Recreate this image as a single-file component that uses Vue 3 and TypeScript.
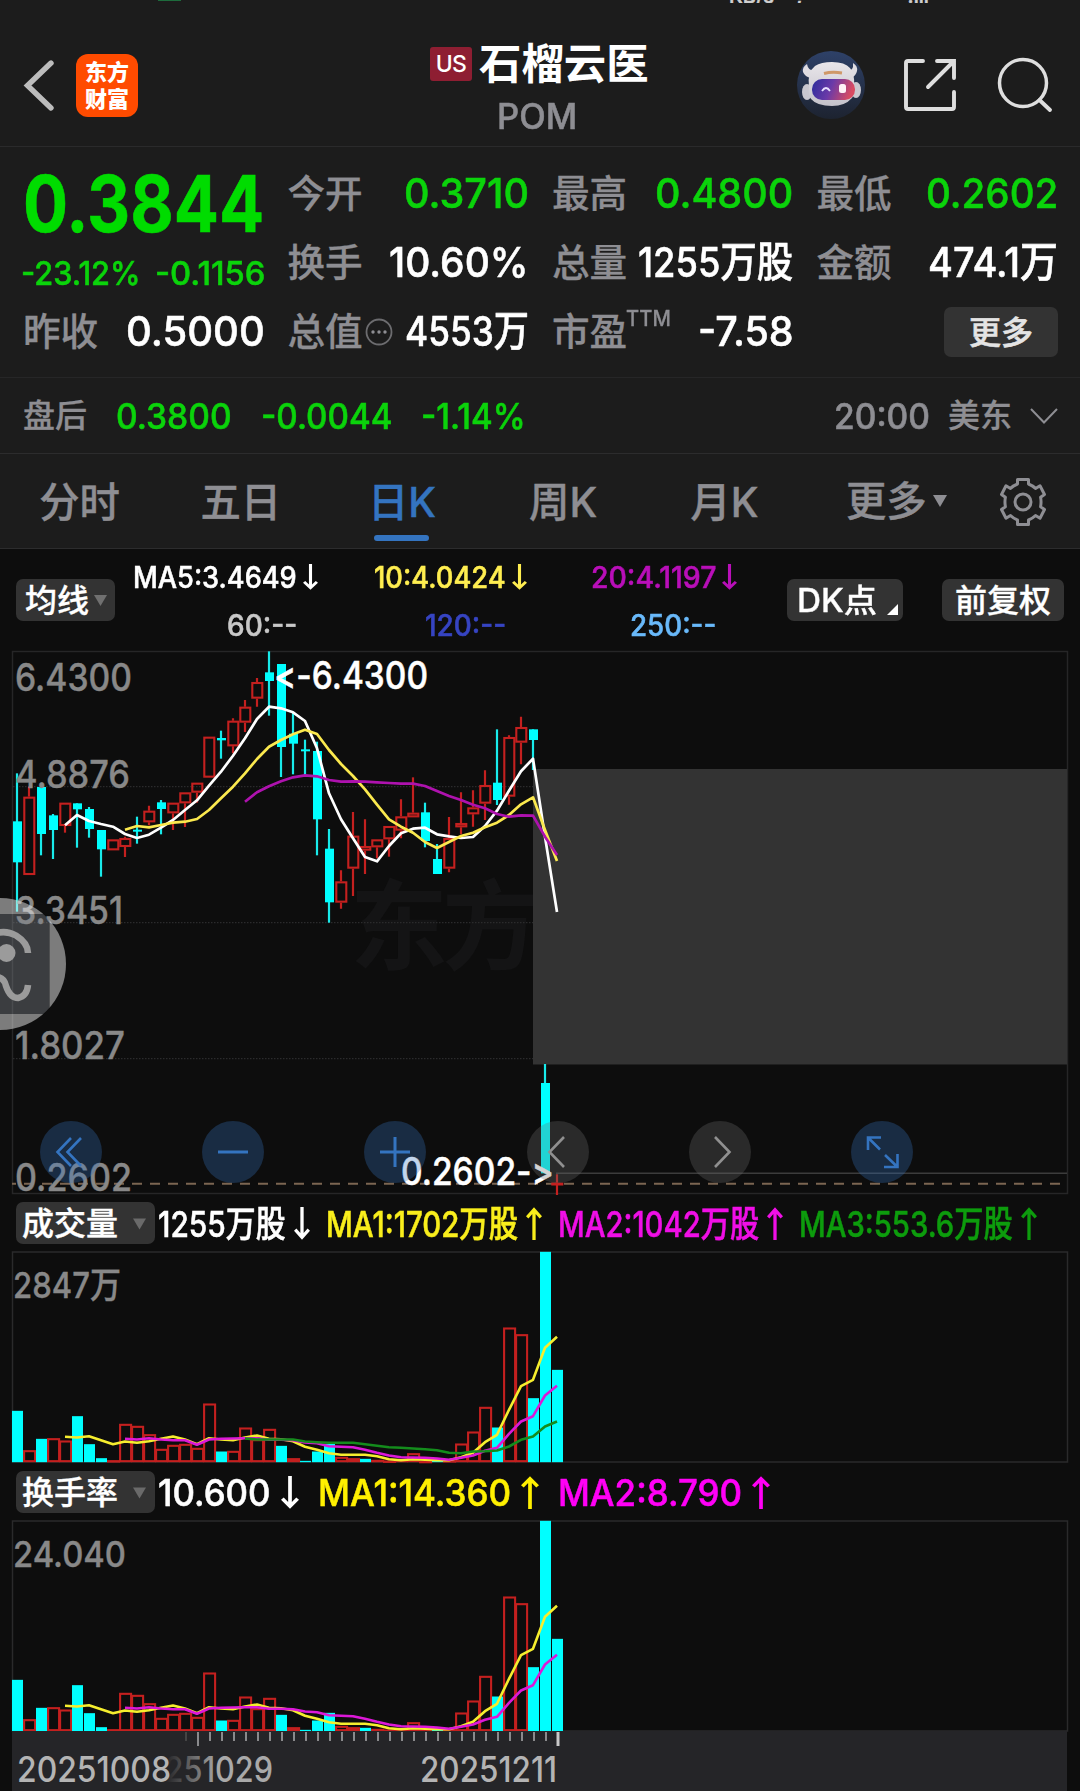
<script setup lang="ts">
import { h, type FunctionalComponent, type ObjectDirective } from 'vue'

/* Squeezes or stretches a label to the given width and keeps the flow in step. */
const vFit: ObjectDirective<HTMLElement, number> = {
  mounted(el, { value }) {
    const natural = el.offsetWidth
    if (!natural) return
    el.style.transform = `scaleX(${value / natural})`
    el.style.marginRight = `${value - natural}px`
  },
}

const Arrow: FunctionalComponent<{ up?: boolean; w: number; ht: number }> = (p) =>
  h('svg', { width: p.w, height: p.ht, viewBox: '0 0 16 32', preserveAspectRatio: 'none', style: { display: 'block', flex: 'none' } }, [
    h('path', {
      d: p.up ? 'M8 32V2M1.2 10L8 2.6L14.8 10' : 'M8 0V30M1.2 22L8 29.4L14.8 22',
      fill: 'none', stroke: 'currentColor', 'stroke-width': 3.3,
    }),
  ])
Arrow.props = ['up', 'w', 'ht']

interface Cell { label: string; value: string; w: number; green?: boolean; dots?: boolean; sup?: string }
const columns: Cell[][] = [
  [
    { label: '今开', value: '0.3710', w: 125, green: true },
    { label: '换手', value: '10.60%', w: 140 },
    { label: '总值', value: '4553万', w: 124, dots: true },
  ],
  [
    { label: '最高', value: '0.4800', w: 138, green: true },
    { label: '总量', value: '1255万股', w: 155 },
    { label: '市盈', value: '-7.58', w: 96, sup: 'TTM' },
  ],
]

const X = (i: number) => 17 + 12 * i

/* [up?, high, bodyTop, bodyBottom, low], in thirds of a pixel below the chart top */
type Candle = [number, number, number, number, number]
const candles: Candle[] = [
  [0, 400, 544, 667, 815], [1, 440, 470, 705, 705], [0, 441, 441, 582, 646], [0, 522, 526, 570, 657],
  [1, 488, 488, 558, 578], [0, 490, 490, 508, 623], [0, 501, 507, 567, 593], [0, 570, 570, 628, 710],
  [1, 598, 598, 631, 631], [1, 590, 594, 621, 651], [0, 530, 569, 575, 611], [1, 497, 512, 547, 556],
  [0, 480, 487, 507, 583], [1, 488, 488, 520, 570], [1, 457, 457, 490, 561], [1, 428, 428, 458, 488],
  [1, 290, 290, 413, 413], [0, 272, 294, 301, 356], [1, 235, 242, 319, 340], [1, 180, 200, 248, 276],
  [1, 114, 126, 176, 200], [0, 34, 97, 123, 227], [0, 72, 72, 321, 411], [0, 218, 281, 311, 403],
  [0, 299, 328, 334, 405], [0, 305, 333, 538, 646], [0, 567, 626, 787, 848], [1, 691, 724, 788, 806],
  [1, 516, 587, 686, 768], [1, 538, 618, 632, 702], [1, 598, 598, 622, 655], [1, 558, 558, 598, 650],
  [1, 478, 529, 572, 595], [1, 412, 518, 532, 532], [0, 488, 517, 603, 622], [0, 612, 657, 702, 702],
  [1, 531, 594, 686, 697], [1, 457, 549, 562, 583], [1, 451, 502, 523, 560], [1, 391, 435, 491, 540],
  [0, 268, 428, 480, 495], [1, 286, 291, 470, 494], [1, 230, 261, 308, 373], [0, 268, 268, 300, 390],
  [0, 1272, 1329, 1600, 1600], [1, 1603, 1628, 1635, 1665],
]
const bars = candles.map(([up, hi, t, b, lo], i) => ({
  x: X(i), up: !!up, hi: 640 + hi / 3, t: 640 + t / 3, b: 640 + b / 3, lo: 640 + lo / 3,
}))

const line = (start: number, ys: number[], base: number) =>
  ys.map((y, k) => `${X(start + k)},${(base + y / 3).toFixed(1)}`).join(' ')

const ma5 = line(4, [556, 525, 543, 552, 560, 582, 594, 584, 563, 540, 510, 481, 437, 395, 347, 295, 237, 200, 205, 217, 243, 325, 460, 538, 595, 651, 664, 618, 580, 566, 563, 583, 589, 594, 591, 558, 512, 452, 394, 356, 590, 816], 640)
const ma10 = line(9, [569, 558, 562, 555, 548, 545, 537, 510, 475, 440, 400, 357, 320, 300, 283, 269, 282, 330, 372, 408, 448, 494, 538, 560, 578, 606, 624, 606, 588, 578, 562, 548, 525, 493, 472, 570, 663], 640)
const ma20 = line(19, [485, 457, 439, 424, 412, 406, 409, 420, 425, 424, 425, 427, 429, 431, 431, 438, 453, 468, 480, 494, 505, 522, 530, 526, 527, 590, 645], 640)

const vol: [number, number][] = [
  [0, 661], [1, 779], [0, 745], [1, 743], [1, 750], [0, 677], [0, 761], [0, 803], [1, 809], [1, 700], [1, 706], [1, 731],
  [1, 775], [1, 763], [1, 760], [1, 772], [1, 639], [0, 783], [1, 781], [1, 711], [1, 746], [1, 715], [0, 766], [1, 803],
  [0, 811], [0, 783], [0, 760], [1, 799], [1, 803], [0, 805], [1, 808], [1, 810], [1, 808], [1, 788], [1, 811], [0, 811],
  [1, 809], [1, 759], [1, 723], [1, 649], [0, 711], [1, 411], [1, 431], [0, 623], [0, 184], [0, 538],
]
const volBars = vol.map(([up, y], i) => ({ x: X(i), up: !!up, y: 1190 + y / 3, ht: (815 - y) / 3 }))
const v1 = line(4, [739, 741, 737, 749, 761, 753, 757, 752, 745, 738, 747, 761, 743, 747, 749, 741, 735, 745, 746, 752, 769, 778, 788, 793, 793, 793, 797, 806, 809, 806, 808, 809, 809, 800, 787, 755, 733, 658, 587, 568, 472, 439], 1190)
const v2 = line(9, [745, 747, 743, 747, 749, 749, 763, 747, 745, 744, 743, 743, 748, 748, 749, 756, 758, 767, 769, 770, 778, 787, 795, 800, 801, 802, 804, 808, 802, 795, 781, 772, 730, 693, 677, 615, 586], 1190)
const v3 = line(19, [744, 747, 747, 747, 747, 753, 755, 757, 757, 757, 761, 766, 770, 772, 774, 776, 779, 787, 788, 783, 782, 780, 768, 748, 738, 708, 693], 1190)

const axisLabels = [
  { t: '6.4300', y: 691, w: 117 }, { t: '4.8876', y: 788, w: 115 }, { t: '3.3451', y: 924, w: 108 },
  { t: '1.8027', y: 1059, w: 110 }, { t: '0.2602', y: 1191, w: 117 },
]
const ticks = Array.from({ length: 31 }, (_, k) => 198 + 12 * k)

const panels = [
  { name: '成交量', top: '2847万', topW: 108, green: true },
  { name: '换手率', top: '24.040', topW: 113, green: false },
]
const volLegend = [
  { t: '1255万股', w: 128, up: false, c: '#fff' },
  { t: 'MA1:1702万股', w: 192, up: true, c: '#f9ee1c' },
  { t: 'MA2:1042万股', w: 201, up: true, c: '#f00fe6' },
  { t: 'MA3:553.6万股', w: 214, up: true, c: '#0d9c0d' },
]
const turnLegend = [
  { t: '10.600', w: 113, up: false, c: '#fff' },
  { t: 'MA1:14.360', w: 193, up: true, c: '#fff000' },
  { t: 'MA2:8.790', w: 184, up: true, c: '#ff00f6' },
]
</script>

<template>
  <div class="app">
    <div class="top">
      <div class="status">
        <i class="bar"></i><span class="net">KB/s</span><span class="net net2">ʼ</span><span class="net net3">.ıll</span>
      </div>
      <header class="header">
        <svg class="back" width="34" height="56" viewBox="0 0 34 56"><path d="M29 6L5.500 28.500L29 51" fill="none" stroke="#bcbcbc" stroke-width="5.4" stroke-linecap="round" /></svg>
        <div class="logo"><span>东方</span><span>财富</span></div>
        <div class="title">
          <div class="name"><span class="us">US</span><b>石榴云医</b></div>
          <div class="code"><span v-fit="80">POM</span></div>
        </div>
        <svg class="robot" width="68" height="68" viewBox="0 0 68 68">
          <defs>
            <linearGradient id="sky" x1="0" y1="0" x2="0" y2="1"><stop offset="0" stop-color="#2e4168" /><stop offset="1" stop-color="#1d2330" /></linearGradient>
            <linearGradient id="visor" x1="0" y1="0" x2="1" y2=".2"><stop offset="0" stop-color="#2a2c9c" /><stop offset=".5" stop-color="#6b3aa8" /><stop offset="1" stop-color="#d84a62" /></linearGradient>
            <linearGradient id="shell" x1="0" y1="0" x2="0" y2="1"><stop offset="0" stop-color="#e9e6ea" /><stop offset="1" stop-color="#c4c2cb" /></linearGradient>
          </defs>
          <circle cx="34" cy="34" r="34" fill="url(#sky)" />
          <path d="M10 13Q5 16 6 21Q8 26 14 27L18 20Q11 20 10 13ZM56 12Q61 15 60 20Q59 25 54 27L50 20Q57 20 56 12Z" fill="#dedce2" />
          <ellipse cx="10" cy="41" rx="5" ry="8" fill="#c9c7cf" /><ellipse cx="59" cy="39" rx="5" ry="8" fill="#c9c7cf" />
          <path d="M12 36Q10 21 18 15Q24 11 35 11Q48 11 53 17Q58 23 57 34Q60 40 55 47Q48 55 35 55Q20 55 14 48Q11 44 12 36Z" fill="url(#shell)" />
          <rect x="15" y="28" width="43" height="21" rx="10" fill="url(#visor)" />
          <path d="M27 22.500Q35 20.500 45 22" stroke="#cf9868" stroke-width="3" fill="none" />
          <path d="M25 40Q29 34 33 40" stroke="#e8e0ff" stroke-width="1.8" fill="none" />
          <rect x="42" y="33" width="7" height="9" rx="2.5" fill="#fff1f6" />
        </svg>
        <svg class="share" width="56" height="56" viewBox="0 0 56 56"><path d="M21 4H6Q4 4 4 6V50Q4 52 6 52H50Q52 52 52 50V35M35 4H52V21M52 4L26 30" fill="none" stroke="#dedede" stroke-width="3.9" stroke-linecap="round" /></svg>
        <svg class="search" width="58" height="58" viewBox="0 0 58 58"><circle cx="27" cy="27" r="23.5" fill="none" stroke="#dedede" stroke-width="3.5" /><path d="M43.5 44L54 54" stroke="#dedede" stroke-width="3.9" stroke-linecap="round" /></svg>
      </header>
    </div>

    <section class="quote">
      <div class="col first">
        <div class="price"><span v-fit="241">0.3844</span></div>
        <div class="chg"><span v-fit="120">-23.12%</span><span v-fit="110">-0.1156</span></div>
        <div class="cell"><label>昨收</label><span class="val"><span v-fit="139">0.5000</span></span></div>
      </div>
      <div v-for="(c, n) in columns" :key="n" class="col">
        <div v-for="r in c" :key="r.label" class="cell">
          <label>{{ r.label }}<sup v-if="r.sup"><span v-fit="45">{{ r.sup }}</span></sup></label>
          <svg v-if="r.dots" class="dots" width="28" height="28" viewBox="0 0 28 28"><circle cx="14" cy="14" r="12.5" fill="none" stroke="#6c6c6f" stroke-width="1.8" /><g fill="#8e8e93"><circle cx="8" cy="14" r="1.7" /><circle cx="14" cy="14" r="1.7" /><circle cx="20" cy="14" r="1.7" /></g></svg>
          <span class="val" :class="{ green: r.green }"><span v-fit="r.w">{{ r.value }}</span></span>
        </div>
      </div>
      <div class="col">
        <div class="cell"><label>最低</label><span class="val green"><span v-fit="132">0.2602</span></span></div>
        <div class="cell"><label>金额</label><span class="val"><span v-fit="130">474.1万</span></span></div>
        <div class="cell end"><span class="more">更多</span></div>
      </div>
    </section>

    <section class="after">
      <label>盘后</label>
      <span class="green a1"><span v-fit="116">0.3800</span></span>
      <span class="green a2"><span v-fit="132">-0.0044</span></span>
      <span class="green a3"><span v-fit="105">-1.14%</span></span>
      <span class="time"><span v-fit="96">20:00</span></span>
      <label class="zone">美东</label>
      <svg width="30" height="20" viewBox="0 0 30 20"><path d="M2 3L15 16.5L28 3" fill="none" stroke="#8e8e93" stroke-width="2" /></svg>
    </section>

    <nav class="tabs">
      <span class="tab">分时</span>
      <span class="tab">五日</span>
      <span class="tab on">日K</span>
      <span class="tab">周K</span>
      <span class="tab">月K</span>
      <span class="tab more-tab">更多<svg width="14" height="12" viewBox="0 0 14 12"><path d="M0 0H14L7 12Z" fill="#8e8e93" /></svg></span>
      <svg class="gear" width="50" height="52" viewBox="0 0 50 52">
        <path d="M19.5 3.5H30.5V8Q34.5 9.5 37.5 12.5L42 9.8L46.5 18.5L42.6 21.3Q43.5 26 42.6 30.7L46.5 33.5L42 42.2L37.5 39.5Q34.5 42.5 30.5 44V48.5H19.5V44Q15.500 42.5 12.500 39.5L8 42.2L3.500 33.5L7.400 30.7Q6.500 26 7.400 21.3L3.500 18.5L8 9.800L12.500 12.5Q15.500 9.500 19.500 8Z" fill="none" stroke="#8e8e93" stroke-width="3" stroke-linejoin="round" />
        <circle cx="25" cy="26" r="8" fill="none" stroke="#8e8e93" stroke-width="3" />
      </svg>
    </nav>

    <section class="ma">
      <div class="pill p1">均线<svg width="13" height="11" viewBox="0 0 13 11"><path d="M0 0H13L6.500 11Z" fill="#707070" /></svg></div>
      <div class="legend">
        <div class="lg" style="color: #fff"><span v-fit="164">MA5:3.4649</span><Arrow :w="15" :ht="26" /></div>
        <div class="lg" style="color: #ffee50"><span v-fit="132">10:4.0424</span><Arrow :w="15" :ht="26" /></div>
        <div class="lg" style="color: #b90fb9"><span v-fit="125">20:4.1197</span><Arrow :w="15" :ht="26" /></div>
        <div class="lg two" style="color: #c8c8c8"><span v-fit="70">60:--</span></div>
        <div class="lg two" style="color: #3644c2"><span v-fit="81">120:--</span></div>
        <div class="lg two" style="color: #69b9fa"><span v-fit="86">250:--</span></div>
      </div>
      <div class="pill p2"><span v-fit="80">DK点</span><svg width="11" height="11" viewBox="0 0 11 11"><path d="M11 0V11H0Z" fill="#fff" /></svg></div>
      <div class="pill p3">前复权</div>
    </section>

    <section class="main">
      <svg class="plot" width="1080" height="549" viewBox="0 649 1080 549">
        <g fill="#141415" class="wm"><text x="350" y="962" font-size="98" textLength="190">东方</text></g>
        <path d="M12.500 651.5H1067.500V1193.500H12.500Z" fill="none" stroke="#262627" stroke-width="1.500" />
        <path d="M13 786.7H1067M13 922.7H1067M13 1058.7H1067" stroke="#2b2b2c" stroke-width="1.300" stroke-dasharray="1.500 1.500" />
        <rect x="533" y="769" width="534" height="295.500" fill="#333" />
        <path d="M556 1173.300H1067" stroke="#3c3c3c" stroke-width="1.600" />
        <path d="M12 1183.700H1067" stroke="#7b6551" stroke-width="2" stroke-dasharray="10 8" stroke-dashoffset="6" />
        <g v-for="b in bars" :key="b.x">
          <template v-if="b.up">
            <path :d="`M${b.x} ${b.hi}V${b.t}M${b.x} ${b.b}V${b.lo}`" stroke="#c4201f" stroke-width="2.200" />
            <rect :x="b.x - 4.7" :y="b.t + 1" width="10" :height="Math.max(b.b - b.t - 2, 0.8)" fill="none" stroke="#c4201f" stroke-width="2.100" />
          </template>
          <template v-else>
            <path :d="`M${b.x} ${b.hi}V${b.lo}`" stroke="#18eaea" stroke-width="2.200" />
            <rect :x="b.x - 4" :y="b.t" width="9" :height="b.b - b.t" fill="#00ffff" />
          </template>
        </g>
        <g fill="none" stroke-width="2.700" stroke-linejoin="round">
          <polyline :points="ma5" stroke="#fff" /><polyline :points="ma10" stroke="#fbe94e" /><polyline :points="ma20" stroke="#ae12ae" />
        </g>
        <g class="ax" font-size="38"><text v-for="a in axisLabels" :key="a.t" x="15" :y="a.y" :textLength="a.w" lengthAdjust="spacingAndGlyphs">{{ a.t }}</text></g>
        <g class="note" font-size="38">
          <text x="274" y="689" textLength="154" lengthAdjust="spacingAndGlyphs">&lt;-6.4300</text>
          <text x="401" y="1185" textLength="153" lengthAdjust="spacingAndGlyphs">0.2602-&gt;</text>
        </g>
      </svg>
      <div class="tools">
        <span class="tool"><svg viewBox="0 0 62 62"><path d="M31 17L17.500 31L31 45M41 17L27.500 31L41 45" /></svg></span>
        <span class="tool"><svg viewBox="0 0 62 62"><path d="M16 31H46" stroke-width="3" /></svg></span>
        <span class="tool"><svg viewBox="0 0 62 62"><path d="M16 31H46M31 16V46" stroke-width="3" /></svg></span>
        <span class="tool gray"><svg viewBox="0 0 62 62"><path d="M37 16L22.500 31L37 46" /></svg></span>
        <span class="tool gray"><svg viewBox="0 0 62 62"><path d="M26 16L40.500 31L26 46" /></svg></span>
        <span class="tool"><svg viewBox="0 0 62 62"><path d="M17 29V16.500H30M17 16.500L29 28.500M46.500 33V46H33M46.500 46L34 34" /></svg></span>
      </div>
      <svg class="bubble" width="67" height="134" viewBox="0 0 67 134">
        <defs>
          <clipPath id="disc"><circle cx="0" cy="67" r="66" /></clipPath>
          <mask id="ring" maskUnits="userSpaceOnUse" x="0" y="0" width="67" height="134"><rect width="67" height="134" fill="#fff" /><rect x="-1" y="17" width="50.500" height="100" fill="#000" /></mask>
        </defs>
        <circle cx="0" cy="67" r="66" fill="#ebebeb" fill-opacity=".5" mask="url(#ring)" />
        <g clip-path="url(#disc)"><rect x="-1" y="17" width="50.500" height="100" fill="#7d8087" fill-opacity=".42" /></g>
        <circle cx="6.500" cy="56" r="9" fill="#9b9b9b" />
        <path d="M-8 38Q4 32 16 38.500Q28 46 28 56M-4 80Q4 80 6 89Q10 101 18 101Q27 99 28 88" fill="none" stroke="#9b9b9b" stroke-width="6.500" />
      </svg>
    </section>

    <section v-for="p in panels" :key="p.name" class="sub">
      <div class="subhead" :class="{ wide: !p.green }">
        <div class="pill p4">{{ p.name }}<svg width="13" height="12" viewBox="0 0 14 12"><path d="M0 0H14L7 12Z" fill="#6a6a6a" /></svg></div>
        <div v-for="l in p.green ? volLegend : turnLegend" :key="l.t" class="item" :style="{ color: l.c }">
          <span v-fit="l.w">{{ l.t }}</span><Arrow :up="l.up" :w="p.green ? 16 : 18" :ht="33" />
        </div>
      </div>
      <svg class="plot" width="1080" height="214" viewBox="0 1249.500 1080 214">
        <path d="M12.500 1251.500H1067.500V1461.500H12.500Z" fill="none" stroke="#2a2a2b" stroke-width="1.500" />
        <g v-for="b in volBars" :key="b.x">
          <rect v-if="b.up" :x="b.x - 4.900" :y="b.y + 1" width="11" :height="Math.max(b.ht - 2, 0.400)" fill="none" stroke="#c4201f" stroke-width="2.100" />
          <rect v-else :x="b.x - 5" :y="b.y" width="11" :height="b.ht" fill="#00ffff" />
        </g>
        <g fill="none" stroke-width="2.600" stroke-linejoin="round">
          <polyline :points="v1" stroke="#f6ee2e" /><polyline :points="v2" stroke="#dc18d8" />
          <polyline v-if="p.green" :points="v3" stroke="#148c1c" />
        </g>
        <g class="ax" font-size="36"><text x="13" y="1297" :textLength="p.topW" lengthAdjust="spacingAndGlyphs">{{ p.top }}</text></g>
      </svg>
    </section>

    <footer class="axis">
      <svg width="1055" height="60" viewBox="12 1731 1055 60">
        <defs><linearGradient id="fade" gradientUnits="userSpaceOnUse" x1="166" y1="0" x2="218" y2="0"><stop offset="0" stop-color="#a9a9a9" stop-opacity="0" /><stop offset="1" stop-color="#a9a9a9" /></linearGradient></defs>
        <path v-for="t in ticks" :key="t" :d="`M${t} 1732V${t === 198 || t === 558 ? 1746 : 1741}`" :stroke="t === 558 ? '#c8c8c8' : '#8a8a8c'" :stroke-width="t === 558 ? 3 : 2" />
        <path d="M186 1732V1741" stroke="#444" stroke-width="2" />
        <g class="dates" font-size="36">
          <text x="17" y="1781.500" textLength="154" lengthAdjust="spacingAndGlyphs">20251008</text>
          <text x="126" y="1781.500" textLength="147" lengthAdjust="spacingAndGlyphs" fill="url(#fade)">20251029</text>
          <text x="420" y="1781.500" textLength="137" lengthAdjust="spacingAndGlyphs">20251211</text>
        </g>
      </svg>
    </footer>
  </div>
</template>

<style>
body { margin: 0; background: #0d0d0d; }
</style>

<style scoped>
.app { width: 1080px; height: 1791px; overflow: hidden; background: #0d0d0d; color: #fff; font-family: Inter, "Noto Sans CJK SC", sans-serif; font-weight: 500; white-space: nowrap; -webkit-text-stroke: .55px currentColor; }
.app span { transform-origin: 0 50%; }
svg { display: block; flex: none; }
.green { color: #0bd30b; }
.top { height: 147px; background: #1c1c1c; border-bottom: 1px solid #2a2a2b; box-sizing: border-box; }
.status { display: flex; overflow: hidden; height: 3px; }
.bar { width: 23px; height: 1px; background: #1d6b3c; margin-left: 158px; }
.net { font-size: 20px; line-height: 20px; margin: -14px 0 0 548px; height: 20px; color: #d0d0d0; }
.net2 { margin: -1px 0 0 22px; }
.net3 { margin-left: 106px; }
.header { display: flex; height: 142px; position: relative; }
.back { margin: 54px 0 0 22px; }
.logo { width: 62px; height: 63px; margin: 51px 0 0 20px; border-radius: 12px; background: #ff4b00; display: flex; flex-direction: column; align-items: center; justify-content: center; font: 900 22px/27px "Noto Sans CJK SC", sans-serif; box-sizing: border-box; padding-bottom: 4px; -webkit-text-stroke: 0; }
.title { position: absolute; left: 430px; top: 36px; width: 220px; }
.name { display: flex; align-items: center; height: 50px; -webkit-text-stroke: 0; }
.name b { font-size: 42.400px; line-height: 50px; margin-left: 7px; font-weight: 600; }
.us { width: 42px; height: 34px; border-radius: 3px; background: #8e1e32; font-size: 23px; line-height: 34px; text-align: center; letter-spacing: -.6px; }
.code { color: #8e8e93; font-size: 35px; line-height: 40px; margin: 7px 0 0 67px; }
.code span, .price span, .chg span, .val span, .a1 span, .a2 span, .a3 span, .time span, .lg span, .pill span, .item span, sup span { display: inline-block; }
.robot { margin: 48px 0 0 659px; }
.share { margin: 54px 0 0 37px; }
.search { margin: 53px 0 0 38px; }

.quote { display: flex; gap: 24px; height: 231px; padding: 12px 22px 0 24px; background: #1c1c1c; border-bottom: 1px solid #262627; box-sizing: border-box; }
.col { width: 240.500px; }
.price { height: 90.500px; line-height: 90px; font-size: 78px; font-weight: 700; color: #00dc00; margin-left: -1px; }
.chg { height: 47px; line-height: 47px; font-size: 33px; color: #0bd30b; display: flex; justify-content: space-between; margin: 0 -1px 0 -3px; }
.cell { height: 69.200px; display: flex; align-items: center; position: relative; }
.cell label { font-size: 37.600px; line-height: 69px; color: #8e8e93; position: relative; margin-left: -1px; -webkit-text-stroke: .3px; }
.cell sup { position: absolute; left: 74px; top: 10px; font-size: 22px; line-height: 22px; }
.val { margin-left: auto; font-size: 41.500px; line-height: 71px; }
.dots { margin-left: 2px; }
.end { justify-content: flex-end; }
.more { width: 114px; height: 50px; line-height: 51px; border-radius: 7px; background: #333; color: #e4e4e4; font-size: 32px; text-align: center; }

.after { display: flex; align-items: center; height: 76px; padding: 0 21px 0 23px; background: #1c1c1c; border-bottom: 1px solid #2c2c2d; box-sizing: border-box; font-size: 35px; line-height: 76px; }
.after label { font-size: 32px; color: #8e8e93; width: 64px; -webkit-text-stroke: .3px; }
.a1 { margin-left: 29px; } .a2 { margin-left: 29px; } .a3 { margin-left: 29px; }
.time { margin-left: auto; color: #8e8e93; }
.after .zone { margin: 0 17px 0 18px; }

.tabs { display: flex; height: 95px; background: #1c1c1c; border-bottom: 1px solid #2c2c2d; box-sizing: border-box; color: #8e8e93; font-size: 40.400px; line-height: 97px; -webkit-text-stroke: .4px; }
.tab { width: 161.200px; text-align: center; position: relative; left: -1px; }
.on { color: #3474c0; }
.on::after { content: ""; position: absolute; left: 53px; bottom: 7px; width: 55px; height: 6px; border-radius: 3px; background: #3474c0; }
.tabs .more-tab { width: auto; margin-left: 41px; display: flex; align-items: center; }
.more-tab svg { margin-left: 6px; }
.gear { margin: 21.500px 0 0 50px; }

.ma { display: flex; height: 100px; position: relative; box-sizing: border-box; padding-left: 16px; }
.pill { display: flex; align-items: center; height: 42px; border-radius: 7px; background: #333; font-size: 32px; line-height: 42px; box-sizing: border-box; flex: none; padding-top: 1px; -webkit-text-stroke: .35px; }
.p1 { width: 99px; margin-top: 30px; padding-left: 9px; }
.p1 svg { margin-left: 5px; }
.legend { display: grid; grid-template-columns: 203px 209px 210px; grid-template-rows: 48px 48px; margin-top: 4px; }
.lg { display: flex; justify-content: flex-end; align-items: center; font-size: 30px; line-height: 48px; }
.lg svg { margin-left: 6px; }
.two { padding-right: 21px; }
.p2 { width: 116px; margin: 30px 0 0 50px; padding-left: 10px; }
.p2 svg { margin: 17px 0 0 10px; }
.p3 { width: 122px; margin: 30px 0 0 39px; padding-left: 13px; }

.main { position: relative; height: 549px; }
.wm { font-family: "Noto Sans CJK SC", sans-serif; font-weight: 700; }
.ax { fill: #888; stroke: #888; stroke-width: .4px; }
.note { fill: #fff; stroke: #fff; stroke-width: .5px; font-feature-settings: "calt" 0; }
.tools { position: absolute; left: 40px; top: 472px; display: flex; gap: 100.200px; }
.tool { width: 62px; height: 62px; border-radius: 50%; background: rgba(52, 116, 192, .3); }
.tool svg { fill: none; stroke: #3474c0; stroke-width: 2.600; }
.gray { background: rgba(110, 110, 110, .3); }
.gray svg { stroke: #909090; }
.bubble { position: absolute; left: 0; top: 248px; }

.sub { height: 269px; }
.subhead { display: flex; height: 52px; padding: 4px 0 0 16px; box-sizing: border-box; }
.p4 { width: 139px; height: 42px; padding-left: 6px; }
.p4 svg { margin-left: 15px; }
.item { display: flex; align-items: center; font-size: 36px; line-height: 42px; height: 43px; margin-left: 17px; }
.item svg { margin-left: 8px; }
.item + .item { margin-left: 16px; }
.pill + .item { margin-left: 3px; }
.wide .item { font-size: 37px; }
.wide .item svg { margin-left: 10px; }
.wide .item + .item { margin-left: 19px; }
.axis { margin: -5px 0 0 12px; width: 1055px; height: 60px; background: #252528; position: relative; }
.dates { fill: #b4b4b4; }
</style>
